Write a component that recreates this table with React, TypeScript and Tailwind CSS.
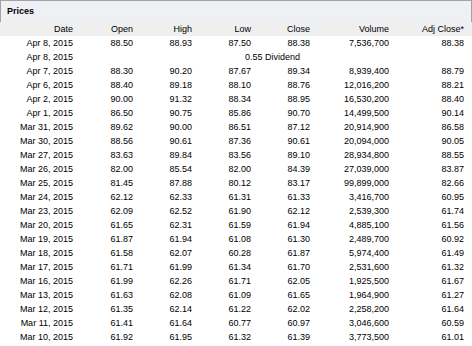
import React from "react";

const rows: (string[] | { date: string; div: string })[] = [
  ["Apr 8, 2015", "88.50", "88.93", "87.50", "88.38", "7,536,700", "88.38"],
  { date: "Apr 8, 2015", div: "0.55 Dividend" },
  ["Apr 7, 2015", "88.30", "90.20", "87.67", "89.34", "8,939,400", "88.79"],
  ["Apr 6, 2015", "88.40", "89.18", "88.10", "88.76", "12,016,200", "88.21"],
  ["Apr 2, 2015", "90.00", "91.32", "88.34", "88.95", "16,530,200", "88.40"],
  ["Apr 1, 2015", "86.50", "90.75", "85.86", "90.70", "14,499,500", "90.14"],
  ["Mar 31, 2015", "89.62", "90.00", "86.51", "87.12", "20,914,900", "86.58"],
  ["Mar 30, 2015", "88.56", "90.61", "87.36", "90.61", "20,094,000", "90.05"],
  ["Mar 27, 2015", "83.63", "89.84", "83.56", "89.10", "28,934,800", "88.55"],
  ["Mar 26, 2015", "82.00", "85.54", "82.00", "84.39", "27,039,000", "83.87"],
  ["Mar 25, 2015", "81.45", "87.88", "80.12", "83.17", "99,899,000", "82.66"],
  ["Mar 24, 2015", "62.12", "62.33", "61.31", "61.33", "3,416,700", "60.95"],
  ["Mar 23, 2015", "62.09", "62.52", "61.90", "62.12", "2,539,300", "61.74"],
  ["Mar 20, 2015", "61.65", "62.31", "61.59", "61.94", "4,885,100", "61.56"],
  ["Mar 19, 2015", "61.87", "61.94", "61.08", "61.30", "2,489,700", "60.92"],
  ["Mar 18, 2015", "61.58", "62.07", "60.28", "61.87", "5,974,400", "61.49"],
  ["Mar 17, 2015", "61.71", "61.99", "61.34", "61.70", "2,531,600", "61.32"],
  ["Mar 16, 2015", "61.99", "62.26", "61.71", "62.05", "1,925,500", "61.67"],
  ["Mar 13, 2015", "61.63", "62.08", "61.09", "61.65", "1,964,900", "61.27"],
  ["Mar 12, 2015", "61.35", "62.14", "61.22", "62.02", "2,258,200", "61.64"],
  ["Mar 11, 2015", "61.41", "61.64", "60.77", "60.97", "3,046,600", "60.59"],
  ["Mar 10, 2015", "61.92", "61.95", "61.32", "61.39", "3,773,500", "61.01"],
];

const headers = ["Date", "Open", "High", "Low", "Close", "Volume", "Adj Close*"];
const grid = "grid grid-cols-[76px_60px_59px_59px_59px_79px_75px]";

export default function App() {
  return (
    <div
      className="w-[472px] h-[346px] bg-white text-[9px] text-black overflow-hidden"
      style={{ fontFamily: '"Liberation Sans", Arial, sans-serif' }}
    >
      <div className="h-[22px] border border-b-0 border-[#a3a3a3] bg-[#eef0f3] flex items-center pl-[6px]">
        <span className="font-bold text-[9px] leading-none">Prices</span>
      </div>
      <div className={`${grid} pl-px h-[14px] bg-[#efefef] items-center leading-[14px]`}>
        {headers.map((h) => (
          <div key={h} className="text-right pr-[4px]">{h}</div>
        ))}
      </div>
      {rows.map((r, i) =>
        Array.isArray(r) ? (
          <div key={i} className={`${grid} pl-px h-[14px] items-center leading-[14px]`}>
            {r.map((c, j) => (
              <div key={j} className="text-right pr-[4px]">{c}</div>
            ))}
          </div>
        ) : (
          <div key={i} className={`${grid} pl-px h-[14px] items-center leading-[14px]`}>
            <div className="text-right pr-[4px]">{r.date}</div>
            <div className="col-span-6 text-center">{r.div}</div>
          </div>
        )
      )}
    </div>
  );
}
